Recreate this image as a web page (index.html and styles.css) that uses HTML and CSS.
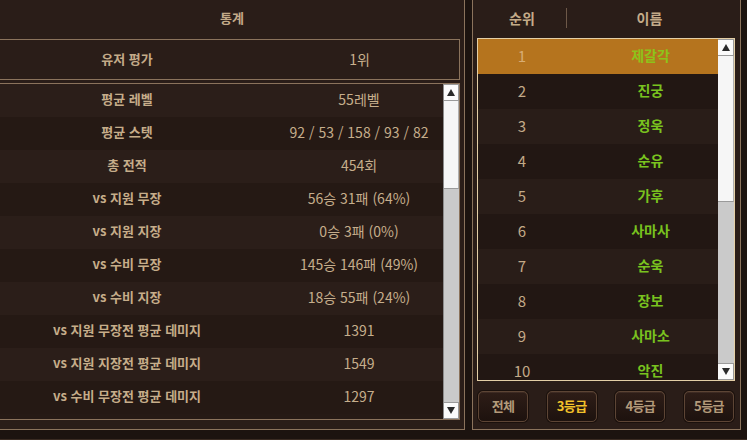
FILE: index.html
```html
<!DOCTYPE html>
<html lang="ko">
<head>
<meta charset="utf-8">
<title>통계</title>
<link rel="stylesheet" href="styles.css">
</head>
<body>
<div class="screen">
  <section class="stats">
    <header class="panel-title">통계</header>
    <div class="rating">
      <span class="lbl">유저 평가</span>
      <span class="val">1위</span>
    </div>
    <div class="stat-box">
      <div class="stat-rows">
        <div class="srow"><span class="lbl">평균 레벨</span><span class="val">55레벨</span></div>
        <div class="srow"><span class="lbl">평균 스텟</span><span class="val">92 / 53 / 158 / 93 / 82</span></div>
        <div class="srow"><span class="lbl">총 전적</span><span class="val">454회</span></div>
        <div class="srow"><span class="lbl">vs 지원 무장</span><span class="val">56승 31패 (64%)</span></div>
        <div class="srow"><span class="lbl">vs 지원 지장</span><span class="val">0승 3패 (0%)</span></div>
        <div class="srow"><span class="lbl">vs 수비 무장</span><span class="val">145승 146패 (49%)</span></div>
        <div class="srow"><span class="lbl">vs 수비 지장</span><span class="val">18승 55패 (24%)</span></div>
        <div class="srow"><span class="lbl">vs 지원 무장전 평균 데미지</span><span class="val">1391</span></div>
        <div class="srow"><span class="lbl">vs 지원 지장전 평균 데미지</span><span class="val">1549</span></div>
        <div class="srow"><span class="lbl">vs 수비 무장전 평균 데미지</span><span class="val">1297</span></div>
      </div>
      <div class="scrollbar sb-left">
        <div class="sb-btn"><i class="tri up"></i></div>
        <div class="sb-thumb"></div>
        <div class="sb-track"></div>
        <div class="sb-btn"><i class="tri down"></i></div>
      </div>
    </div>
  </section>

  <section class="ranking">
    <header class="rank-head">
      <span class="h-rank">순위</span>
      <i class="h-sep"></i>
      <span class="h-name">이름</span>
    </header>
    <div class="rank-box">
      <div class="rank-rows">
        <div class="rrow sel"><span class="rk">1</span><span class="nm">제갈각</span></div>
        <div class="rrow"><span class="rk">2</span><span class="nm">진궁</span></div>
        <div class="rrow"><span class="rk">3</span><span class="nm">정욱</span></div>
        <div class="rrow"><span class="rk">4</span><span class="nm">순유</span></div>
        <div class="rrow"><span class="rk">5</span><span class="nm">가후</span></div>
        <div class="rrow"><span class="rk">6</span><span class="nm">사마사</span></div>
        <div class="rrow"><span class="rk">7</span><span class="nm">순욱</span></div>
        <div class="rrow"><span class="rk">8</span><span class="nm">장보</span></div>
        <div class="rrow"><span class="rk">9</span><span class="nm">사마소</span></div>
        <div class="rrow"><span class="rk">10</span><span class="nm">악진</span></div>
      </div>
      <div class="scrollbar sb-right">
        <div class="sb-btn"><i class="tri up"></i></div>
        <div class="sb-thumb"></div>
        <div class="sb-track"></div>
        <div class="sb-btn"><i class="tri down"></i></div>
      </div>
    </div>
    <nav class="tabs">
      <button class="tab">전체</button>
      <button class="tab active">3등급</button>
      <button class="tab">4등급</button>
      <button class="tab">5등급</button>
    </nav>
  </section>
</div>
</body>
</html>
```

FILE: styles.css
```css
* { box-sizing: border-box; margin: 0; padding: 0; }

html, body {
  width: 747px;
  height: 440px;
  overflow: hidden;
  background: #1c130f;
}

body {
  font-family: "Noto Sans CJK KR", "Noto Sans", sans-serif;
  font-size: 13px;
  color: #c8b08e;
}

.screen {
  display: flex;
  align-items: flex-start;
  height: 440px;
  border-bottom: 1px solid #3a2b22;
}

/* ---------- left panel ---------- */
.stats {
  width: 465px;
  height: 430px;
  background: #2a1d18;
  border-right: 1px solid #8b735c;
  border-bottom: 1px solid #8b735c;
  display: flex;
  flex-direction: column;
}

.panel-title {
  height: 39px;
  line-height: 36px;
  text-align: center;
  font-weight: 700;
  color: #c4ab89;
}

.rating {
  height: 41px;
  margin-right: 4px;
  border: 1px solid #8b735c;
  border-left: none;
  display: grid;
  grid-template-columns: 254px 1fr;
  align-items: center;
  padding-bottom: 2px;
  background: #2a1d18;
}

.lbl, .val {
  text-align: center;
  white-space: nowrap;
}

.rating .lbl { font-weight: 700; color: #c4ab89; }
.rating .val { padding-left: 6px; font-size: 14px; }

.stat-box {
  margin-top: 3px;
  margin-right: 4px;
  height: 337px;
  border: 1px solid #8b735c;
  border-left: none;
  display: flex;
  overflow: hidden;
}

.stat-rows {
  flex: 1;
  display: flex;
  flex-direction: column;
  background: #261a15;
}

.srow {
  height: 33px;
  flex: none;
  display: grid;
  grid-template-columns: 254px 1fr;
  align-items: center;
  padding-bottom: 4px;
  background: #2b1e19;
}

.srow:nth-child(even) { background: #251914; }

.srow .val { padding-left: 21px; font-size: 14px; color: #c6ae8c; }

.srow .lbl { font-weight: 700; color: #c6ad8a; }

/* ---------- scrollbars ---------- */
.scrollbar {
  width: 16px;
  flex: none;
  display: flex;
  flex-direction: column;
  background: #c9c9c9;
  border-left: 1px solid #8c8c8c;
}

.sb-btn {
  height: 17px;
  flex: none;
  background: #fbfbfb;
  border: 1px solid #9a9a9a;
  border-left: none;
  display: flex;
  align-items: center;
  justify-content: center;
}

.sb-thumb {
  flex: none;
  background: #f6f6f6;
  border-right: 1px solid #b0b0b0;
  border-bottom: 1px solid #9a9a9a;
}

.sb-track {
  flex: 1;
  background: #cacaca;
}

.sb-left .sb-thumb { height: 88px; }
.sb-right .sb-thumb { height: 146px; }

.tri {
  width: 0;
  height: 0;
  border-left: 4px solid transparent;
  border-right: 4px solid transparent;
}
.tri.up { border-bottom: 7px solid #2a2a2a; }
.tri.down { border-top: 7px solid #2a2a2a; }

/* ---------- right panel ---------- */
.ranking {
  margin-left: 7px;
  width: 269px;
  height: 430px;
  background: #2a1d18;
  border-left: 1px solid #8b735c;
  border-right: 1px solid #8b735c;
  border-bottom: 1px solid #8b735c;
  display: flex;
  flex-direction: column;
}

.rank-head {
  height: 38px;
  padding: 0 8px 2px 5px;
  display: grid;
  grid-template-columns: 88px 1px 1fr;
  align-items: center;
  text-align: center;
  font-size: 14px;
  font-weight: 700;
  color: #c4ab89;
}

.h-sep {
  width: 1px;
  height: 20px;
  background: #6d5848;
  justify-self: start;
}

.rank-box {
  margin-left: 4px;
  width: 258px;
  height: 343px;
  border: 1px solid #e4cfa6;
  display: flex;
  overflow: hidden;
  background: #251a15;
}

.rank-rows {
  flex: 1;
  display: flex;
  flex-direction: column;
}

.rrow {
  height: 35px;
  flex: none;
  display: grid;
  grid-template-columns: 88px 1fr;
  align-items: center;
  padding-bottom: 3px;
  text-align: center;
  background: #291d18;
}

.rrow:nth-child(even) { background: #221713; }

.rrow .rk { color: #c3aa88; font-size: 15px; }
.rrow .nm { color: #79c21f; font-weight: 700; font-size: 14px; padding-left: 17px; }

.rrow.sel { background: #b5741e; }
.rrow.sel .rk { color: #d8ad74; }
.rrow.sel .nm { color: #8dc31a; }

.sb-right { border-left: none; }

.tabs {
  margin-top: 10px;
  padding: 0 6px 0 5px;
  display: flex;
  justify-content: space-between;
}

.tab {
  width: 50px;
  height: 31px;
  padding-bottom: 2px;
  border-radius: 5px;
  border: 1px solid #5d4535;
  background: linear-gradient(#2e1d17, #1d120e);
  box-shadow: inset 0 1px 0 rgba(255, 220, 180, 0.08), 0 0 0 1px #1a100c;
  font-family: "Noto Sans CJK KR", "Noto Sans", sans-serif;
  font-size: 13px;
  font-weight: 700;
  color: #b39a7a;
  letter-spacing: -0.6px;
}

.tab.active { color: #f2c22a; }
```
